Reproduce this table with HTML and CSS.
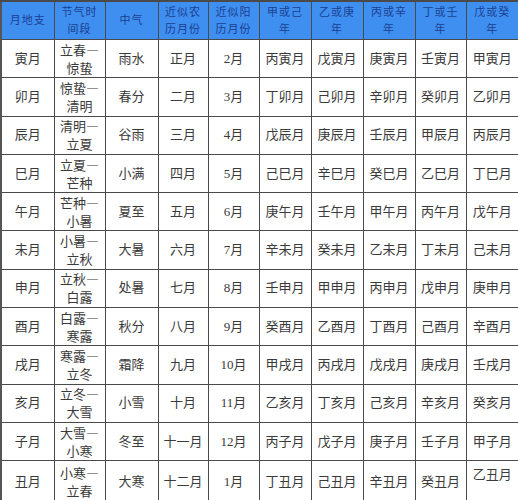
FILE: index.html
```html
<!DOCTYPE html>
<html lang="zh">
<head>
<meta charset="utf-8">
<link rel="stylesheet" href="styles.css">
</head>
<body>
<table class="grid">
<colgroup>
<col class="c1"><col class="c2"><col class="c3"><col class="c4"><col class="c5">
<col class="c6"><col class="c7"><col class="c8"><col class="c9"><col class="c10">
</colgroup>
<thead>
<tr class="head">
<th>月地支</th><th>节气时<br>间段</th><th>中气</th><th>近似农<br>历月份</th><th>近似阳<br>历月份</th>
<th>甲或己<br>年</th><th>乙或庚<br>年</th><th>丙或辛<br>年</th><th>丁或壬<br>年</th><th>戊或癸<br>年</th>
</tr>
</thead>
<tbody>
<tr><td>寅月</td><td class="term">立春—<br>惊蛰</td><td>雨水</td><td>正月</td><td>2月</td><td>丙寅月</td><td>戊寅月</td><td>庚寅月</td><td>壬寅月</td><td>甲寅月</td></tr>
<tr><td>卯月</td><td class="term">惊蛰—<br>清明</td><td>春分</td><td>二月</td><td>3月</td><td>丁卯月</td><td>己卯月</td><td>辛卯月</td><td>癸卯月</td><td>乙卯月</td></tr>
<tr><td>辰月</td><td class="term">清明—<br>立夏</td><td>谷雨</td><td>三月</td><td>4月</td><td>戊辰月</td><td>庚辰月</td><td>壬辰月</td><td>甲辰月</td><td>丙辰月</td></tr>
<tr><td>巳月</td><td class="term">立夏—<br>芒种</td><td>小满</td><td>四月</td><td>5月</td><td>己巳月</td><td>辛巳月</td><td>癸巳月</td><td>乙巳月</td><td>丁巳月</td></tr>
<tr><td>午月</td><td class="term">芒种—<br>小暑</td><td>夏至</td><td>五月</td><td>6月</td><td>庚午月</td><td>壬午月</td><td>甲午月</td><td>丙午月</td><td>戊午月</td></tr>
<tr><td>未月</td><td class="term">小暑—<br>立秋</td><td>大暑</td><td>六月</td><td>7月</td><td>辛未月</td><td>癸未月</td><td>乙未月</td><td>丁未月</td><td>己未月</td></tr>
<tr><td>申月</td><td class="term">立秋—<br>白露</td><td>处暑</td><td>七月</td><td>8月</td><td>壬申月</td><td>甲申月</td><td>丙申月</td><td>戊申月</td><td>庚申月</td></tr>
<tr><td>酉月</td><td class="term">白露—<br>寒露</td><td>秋分</td><td>八月</td><td>9月</td><td>癸酉月</td><td>乙酉月</td><td>丁酉月</td><td>己酉月</td><td>辛酉月</td></tr>
<tr><td>戌月</td><td class="term">寒露—<br>立冬</td><td>霜降</td><td>九月</td><td>10月</td><td>甲戌月</td><td>丙戌月</td><td>戊戌月</td><td>庚戌月</td><td>壬戌月</td></tr>
<tr><td>亥月</td><td class="term">立冬—<br>大雪</td><td>小雪</td><td>十月</td><td>11月</td><td>乙亥月</td><td>丁亥月</td><td>己亥月</td><td>辛亥月</td><td>癸亥月</td></tr>
<tr><td>子月</td><td class="term">大雪—<br>小寒</td><td>冬至</td><td>十一月</td><td>12月</td><td>丙子月</td><td>戊子月</td><td>庚子月</td><td>壬子月</td><td>甲子月</td></tr>
<tr><td>丑月</td><td class="term">小寒—<br>立春</td><td>大寒</td><td>十二月</td><td>1月</td><td>丁丑月</td><td>己丑月</td><td>辛丑月</td><td>癸丑月</td><td class="top">乙丑月</td></tr>
</tbody>
</table>
</body>
</html>
```
FILE: styles.css
```css
html, body {
  margin: 0;
  padding: 0;
  background: #ffffff;
}

.grid {
  width: 518px;
  border-collapse: collapse;
  table-layout: fixed;
  font-family: "Liberation Serif", "Noto Sans CJK SC", serif;
  color: #3a3a3a;
}

.c1 { width: 53px; }
.c2 { width: 51px; }
.c3 { width: 53px; }
.c4 { width: 50px; }
.c5 { width: 51px; }
.c6 { width: 52px; }
.c7 { width: 52px; }
.c8 { width: 52px; }
.c9 { width: 51px; }
.c10 { width: 53px; }

.grid th,
.grid td {
  border: 1px solid #4a4a4a;
  text-align: center;
  padding: 0;
  overflow: hidden;
}

.head th {
  height: 37px;
  background: #3f8ff0;
  color: #1c3f92;
  font-weight: normal;
  font-size: 11px;
  line-height: 17px;
  letter-spacing: 1px;
  vertical-align: middle;
  border-top: 2px solid #4a4a4a;
}

.grid td {
  height: 37.3px;
  font-size: 13px;
  line-height: 18px;
  vertical-align: middle;
}

.grid td.term {
  font-family: "Noto Sans CJK SC", sans-serif;
  line-height: 18px;
}

.grid th:first-child,
.grid td:first-child {
  border-left: 2px solid #555;
}

.grid th:last-child,
.grid td:last-child {
  border-right: 2px solid #555;
}

.grid tbody tr:last-child td {
  border-bottom: 2px solid #555;
}

.grid td.top {
  vertical-align: top;
  padding-top: 5px;
}
```
